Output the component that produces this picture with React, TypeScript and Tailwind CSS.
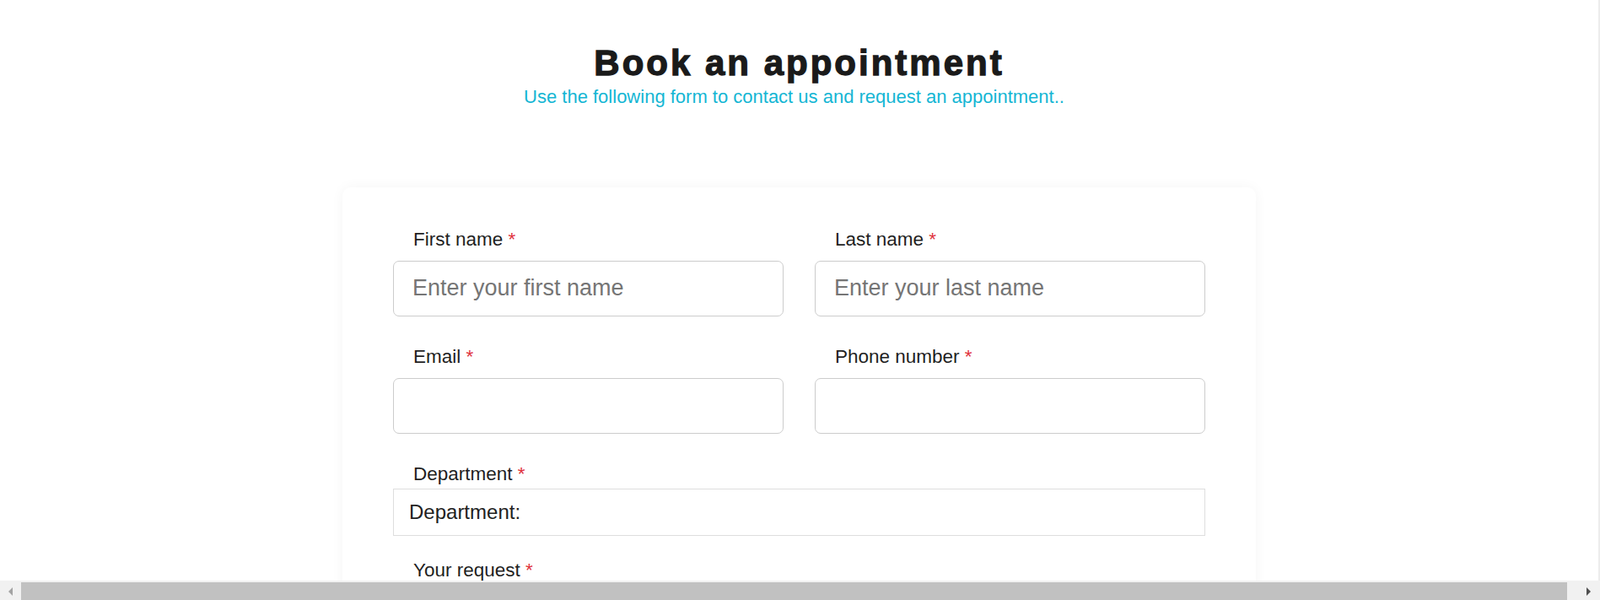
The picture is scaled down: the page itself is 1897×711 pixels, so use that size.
import { useState } from 'react'

type Field = { key: string; label: string; placeholder?: string; type?: string }

const fields: Field[] = [
  { key: 'firstName', label: 'First name', placeholder: 'Enter your first name' },
  { key: 'lastName', label: 'Last name', placeholder: 'Enter your last name' },
  { key: 'email', label: 'Email', type: 'email' },
  { key: 'phone', label: 'Phone number', type: 'tel' },
]

function Label({ text, htmlFor }: { text: string; htmlFor: string }) {
  return (
    <label htmlFor={htmlFor} className="block pl-6 text-[22.5px] leading-[26px] text-[#1f1f1f]">
      {text}
      <span className="text-[#e0323c]"> *</span>
    </label>
  )
}

export default function App() {
  const [values, setValues] = useState<Record<string, string>>({})
  const [department, setDepartment] = useState('')
  const [request, setRequest] = useState('')

  return (
    <div className="flex h-[711px] flex-col overflow-hidden bg-white font-['Liberation_Sans',Arial,sans-serif]">
      <div className="flex min-h-0 flex-1">
        <main className="min-w-0 flex-1 overflow-hidden">
          <header className="pt-[51px] text-center">
            <h1 className="text-[42px] leading-[48px] font-bold tracking-[3px] text-[#1a1a1a] [-webkit-text-stroke:1.3px_#1a1a1a]">
              Book an appointment
            </h1>
            <p className="mt-[3.5px] pr-[12px] text-[22px] leading-[24px] text-[#14b6d4]">
              Use the following form to contact us and request an appointment..
            </p>
          </header>

          <form
            onSubmit={(e) => e.preventDefault()}
            className="mx-auto mt-[95.5px] w-[1083px] rounded-[10px] bg-white px-[60px] pt-[49px] pb-10 shadow-[0_0_16px_rgba(0,0,0,0.045)]"
          >
            <div className="grid grid-cols-2 gap-x-[37px] gap-y-[35.5px]">
              {fields.map((f) => (
                <div key={f.key}>
                  <Label text={f.label} htmlFor={f.key} />
                  <input
                    id={f.key}
                    type={f.type ?? 'text'}
                    required
                    value={values[f.key] ?? ''}
                    onChange={(e) => setValues((v) => ({ ...v, [f.key]: e.target.value }))}
                    placeholder={f.placeholder}
                    className="mt-[11.5px] block h-[66px] w-full rounded-[7px] border border-[#cccccc] bg-white px-[22px] text-[27px] text-[#222] outline-none placeholder:text-[#757575]"
                  />
                </div>
              ))}
              <div className="col-span-2">
                <Label text="Department" htmlFor="department" />
                <select
                  id="department"
                  required
                  value={department}
                  onChange={(e) => setDepartment(e.target.value)}
                  className="mt-[4px] block h-[56px] w-full appearance-none rounded-none border border-[#dedede] bg-white px-[18px] text-[24px] text-[#222] outline-none"
                >
                  <option value="">Department:</option>
                  <option value="cardiology">Cardiology</option>
                  <option value="dermatology">Dermatology</option>
                  <option value="pediatrics">Pediatrics</option>
                </select>
              </div>
            </div>

            <div className="mt-[27.5px]">
              <Label text="Your request" htmlFor="request" />
              <textarea
                id="request"
                required
                rows={5}
                value={request}
                onChange={(e) => setRequest(e.target.value)}
                className="mt-[11.5px] block w-full rounded-[7px] border border-[#cccccc] px-[22px] py-3 text-[22px] outline-none"
              />
            </div>
          </form>
        </main>
        <div className="w-[2px] shrink-0 bg-[#ececec]" />
      </div>

      {/* horizontal scrollbar as it shows in the screenshot */}
      <div className="flex h-[23px] shrink-0 bg-[#f1f1f1]">
        <div className="flex w-[25px] items-center justify-center pt-[2px]">
          <span className="border-y-[5px] border-r-[5px] border-y-transparent border-r-[#a3a3a3]" />
        </div>
        <div className="mt-[2px] flex-1 bg-[#c1c1c1]" />
        <div className="flex w-[39px] items-center justify-end pt-[2px] pr-[11px]">
          <span className="border-y-[5px] border-l-[5px] border-y-transparent border-l-[#505050]" />
        </div>
      </div>
    </div>
  )
}
